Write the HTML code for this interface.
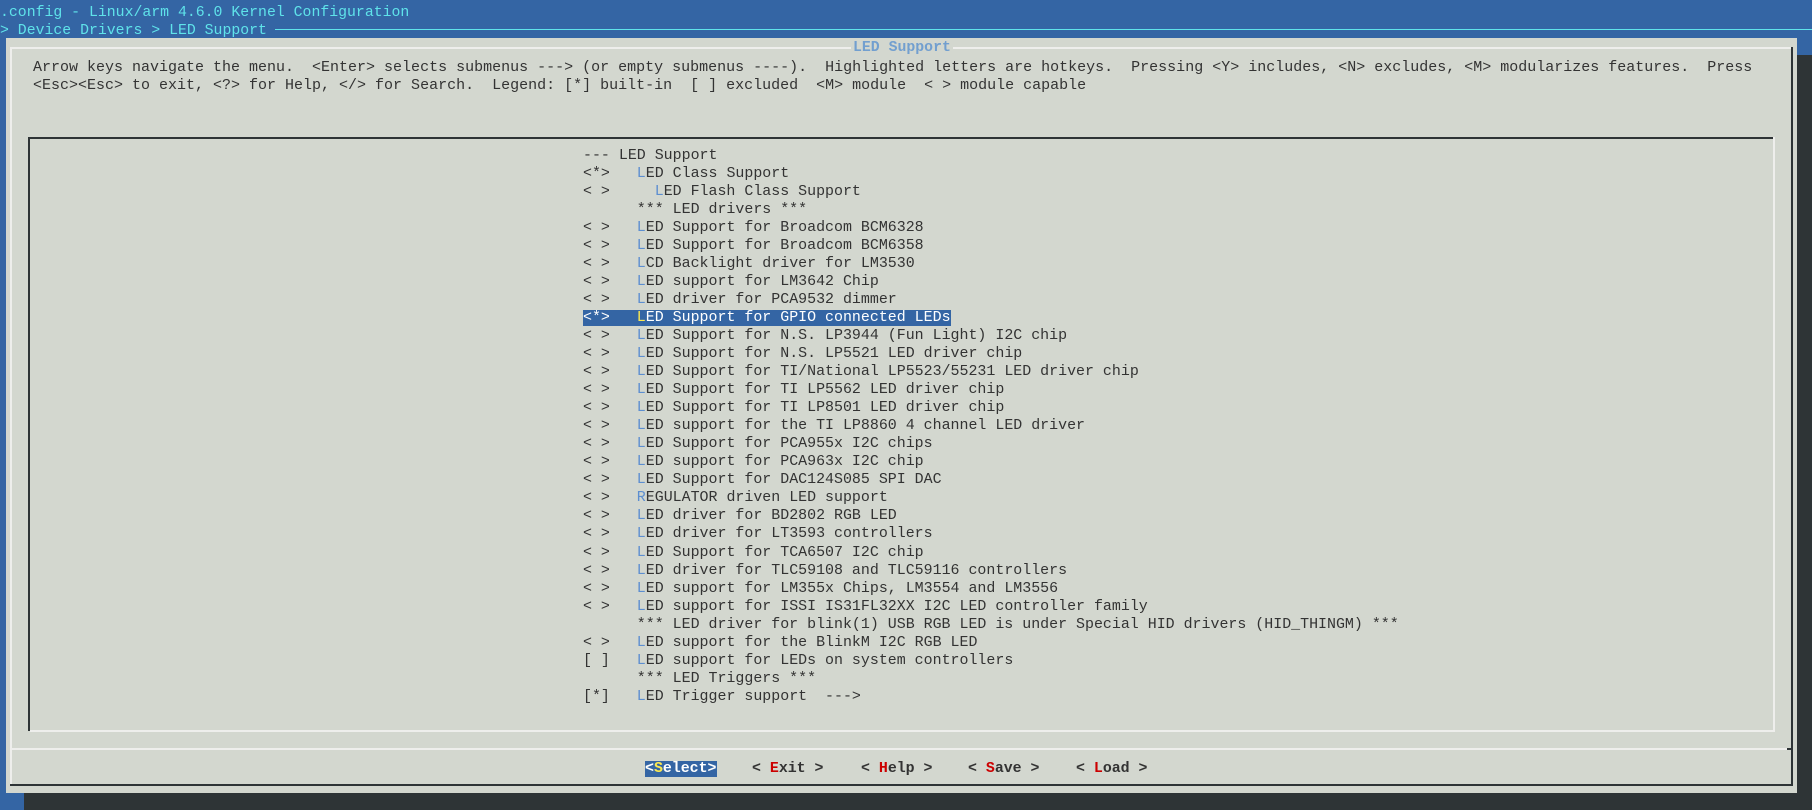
<!DOCTYPE html>
<html><head><meta charset="utf-8"><style>
*{margin:0;padding:0}
body{width:1812px;height:810px;background:#3465a4;position:relative;overflow:hidden;font-family:"Liberation Mono","DejaVu Sans Mono",monospace;font-size:14.83px;}
pre{font-family:inherit;font-size:inherit;position:absolute;white-space:pre;}
.c{color:#5fe3ea;}
.t{top:4px;left:0;line-height:18px;}
.line{position:absolute;left:275px;right:0;top:29px;height:1px;background:#5fe3ea;}
.dlg{position:absolute;left:6px;top:38px;width:1791px;height:755px;background:#d3d7cf;}
.shr{position:absolute;left:1797px;top:55px;width:15px;height:755px;background:#2e3436;}
.shb{position:absolute;left:24px;top:793px;width:1788px;height:17px;background:#2e3436;}
.b{position:absolute;}
.txt{color:#333;}
.h{color:#5c8ed0;}
.sel{background:#3465a4;color:#fff;}
.y{color:#fce94f;}
.r{color:#cc0000;}
.btn{position:absolute;top:760px;line-height:18px;font-weight:bold;color:#333;font-size:14.9px;}
</style></head><body>
<pre class="t c">.config - Linux/arm 4.6.0 Kernel Configuration
&gt; Device Drivers &gt; LED Support</pre>
<div class="line"></div>
<div class="dlg"></div>
<div class="shr"></div>
<div class="shb"></div>
<div class="b" style="left:10px;top:47px;width:1782px;height:2px;background:#eeeeec"></div>
<div class="b" style="left:10px;top:47px;width:2px;height:738px;background:#eeeeec"></div>
<div class="b" style="left:1791px;top:47px;width:2px;height:739px;background:#2e3436"></div>
<div class="b" style="left:10px;top:784px;width:1783px;height:2px;background:#2e3436"></div>
<div class="b" style="left:10px;top:748px;width:1781px;height:2px;background:#eeeeec"></div>
<div class="b" style="left:1787px;top:748px;width:5px;height:2px;background:#2e3436"></div>
<pre style="left:853px;top:39px;line-height:18px;color:#729fcf;font-weight:bold;background:#d3d7cf;padding:0 2px;margin-left:-2px">LED Support</pre>
<pre class="txt" style="left:33px;top:59px;line-height:17.7px;font-size:15px;">Arrow keys navigate the menu.  &lt;Enter&gt; selects submenus ---&gt; (or empty submenus ----).  Highlighted letters are hotkeys.  Pressing &lt;Y&gt; includes, &lt;N&gt; excludes, &lt;M&gt; modularizes features.  Press
&lt;Esc&gt;&lt;Esc&gt; to exit, &lt;?&gt; for Help, &lt;/&gt; for Search.  Legend: [*] built-in  [ ] excluded  &lt;M&gt; module  &lt; &gt; module capable</pre>
<div class="b" style="left:28px;top:137px;width:1746px;height:2px;background:#2e3436"></div>
<div class="b" style="left:28px;top:137px;width:2px;height:594px;background:#2e3436"></div>
<div class="b" style="left:1773px;top:137px;width:2px;height:594px;background:#eeeeec"></div>
<div class="b" style="left:30px;top:730px;width:1745px;height:2px;background:#eeeeec"></div>
<pre class="txt" style="left:583px;top:146.5px;line-height:18.05px;font-size:14.95px;">--- LED Support
&lt;*&gt;   <span class="h">L</span>ED Class Support
&lt; &gt;     <span class="h">L</span>ED Flash Class Support
      *** LED drivers ***
&lt; &gt;   <span class="h">L</span>ED Support for Broadcom BCM6328
&lt; &gt;   <span class="h">L</span>ED Support for Broadcom BCM6358
&lt; &gt;   <span class="h">L</span>CD Backlight driver for LM3530
&lt; &gt;   <span class="h">L</span>ED support for LM3642 Chip
&lt; &gt;   <span class="h">L</span>ED driver for PCA9532 dimmer
<span class="sel">&lt;*&gt;   <span class="y">L</span>ED Support for GPIO connected LEDs</span>
&lt; &gt;   <span class="h">L</span>ED Support for N.S. LP3944 (Fun Light) I2C chip
&lt; &gt;   <span class="h">L</span>ED Support for N.S. LP5521 LED driver chip
&lt; &gt;   <span class="h">L</span>ED Support for TI/National LP5523/55231 LED driver chip
&lt; &gt;   <span class="h">L</span>ED Support for TI LP5562 LED driver chip
&lt; &gt;   <span class="h">L</span>ED Support for TI LP8501 LED driver chip
&lt; &gt;   <span class="h">L</span>ED support for the TI LP8860 4 channel LED driver
&lt; &gt;   <span class="h">L</span>ED Support for PCA955x I2C chips
&lt; &gt;   <span class="h">L</span>ED support for PCA963x I2C chip
&lt; &gt;   <span class="h">L</span>ED Support for DAC124S085 SPI DAC
&lt; &gt;   <span class="h">R</span>EGULATOR driven LED support
&lt; &gt;   <span class="h">L</span>ED driver for BD2802 RGB LED
&lt; &gt;   <span class="h">L</span>ED driver for LT3593 controllers
&lt; &gt;   <span class="h">L</span>ED Support for TCA6507 I2C chip
&lt; &gt;   <span class="h">L</span>ED driver for TLC59108 and TLC59116 controllers
&lt; &gt;   <span class="h">L</span>ED support for LM355x Chips, LM3554 and LM3556
&lt; &gt;   <span class="h">L</span>ED support for ISSI IS31FL32XX I2C LED controller family
      *** LED driver for blink(1) USB RGB LED is under Special HID drivers (HID_THINGM) ***
&lt; &gt;   <span class="h">L</span>ED support for the BlinkM I2C RGB LED
[ ]   <span class="h">L</span>ED support for LEDs on system controllers
      *** LED Triggers ***
[*]   <span class="h">L</span>ED Trigger support  ---&gt;</pre>
<pre class="btn" style="left:645px;"><span class="sel">&lt;<span class="y">S</span>elect&gt;</span></pre>
<pre class="btn" style="left:752px;">&lt; <span class="r">E</span>xit &gt;</pre>
<pre class="btn" style="left:861px;">&lt; <span class="r">H</span>elp &gt;</pre>
<pre class="btn" style="left:968px;">&lt; <span class="r">S</span>ave &gt;</pre>
<pre class="btn" style="left:1076px;">&lt; <span class="r">L</span>oad &gt;</pre>
</body></html>
